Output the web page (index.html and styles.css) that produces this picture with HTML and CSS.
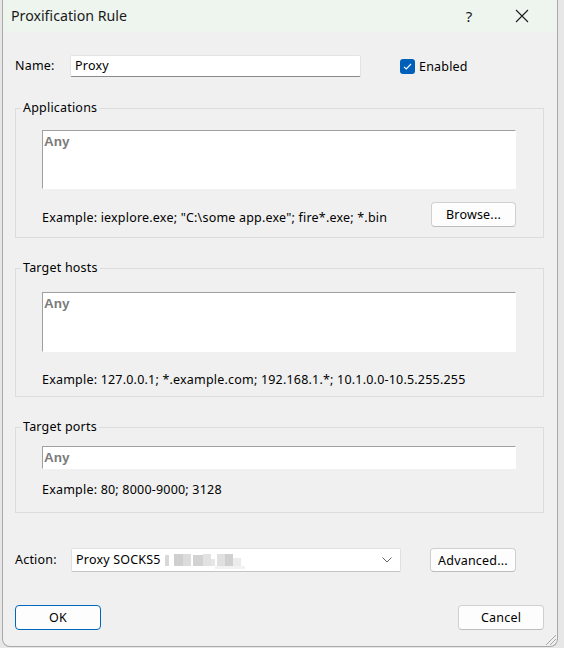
FILE: index.html
```html
<!DOCTYPE html>
<html lang="en">
<head>
<meta charset="utf-8">
<title>Proxification Rule</title>
<link rel="stylesheet" href="styles.css">
</head>
<body>
<div class="window">
  <header class="titlebar">
    <span class="title">Proxification Rule</span>
    <span class="help">?</span>
    <span class="close">
      <svg width="14" height="14" viewBox="0 0 14 14"><path d="M1 1L13 13M13 1L1 13" stroke="#1a1a1a" stroke-width="1.1" fill="none"/></svg>
    </span>
  </header>
  <main class="content">
    <div class="name-row">
      <span class="lbl">Name:</span>
      <div class="field name-field">Proxy</div>
      <div class="check">
        <span class="box"><svg width="15" height="15" viewBox="0 0 15 15"><path d="M4 7.8L6.3 10L11 5" stroke="#fff" stroke-width="1.1" fill="none"/></svg></span>
        <span>Enabled</span>
      </div>
    </div>

    <fieldset class="group g-apps">
      <legend>Applications</legend>
      <div class="area area-apps"><span class="any">Any</span></div>
      <div class="example-row">
        <span class="example">Example: iexplore.exe; "C:\some app.exe"; fire*.exe; *.bin</span>
        <button class="btn browse">Browse...</button>
      </div>
    </fieldset>

    <fieldset class="group g-hosts">
      <legend>Target hosts</legend>
      <div class="area area-hosts"><span class="any">Any</span></div>
      <div class="example ex-hosts">Example: 127.0.0.1; *.example.com; 192.168.1.*; 10.1.0.0-10.5.255.255</div>
    </fieldset>

    <fieldset class="group g-ports">
      <legend>Target ports</legend>
      <div class="area area-ports"><span class="any">Any</span></div>
      <div class="example ex-ports">Example: 80; 8000-9000; 3128</div>
    </fieldset>

    <div class="action-row">
      <span class="lbl">Action:</span>
      <div class="field select">
        <span>Proxy SOCKS5</span>
        <svg class="blur" width="90" height="18" viewBox="0 0 90 18">
          <rect x="0" y="4" width="4" height="11" fill="#d8d8d8"/>
          <rect x="9" y="3" width="9" height="12" fill="#cfcfcf"/>
          <rect x="18" y="3" width="8" height="12" fill="#dcdcdc"/>
          <rect x="28" y="4" width="10" height="11" fill="#d2d2d2"/>
          <rect x="38" y="3" width="8" height="12" fill="#e2e2e2"/>
          <rect x="46" y="8" width="4" height="7" fill="#e6e6e6"/>
          <rect x="52" y="3" width="8" height="12" fill="#e0e0e0"/>
          <rect x="60" y="3" width="8" height="12" fill="#d0d0d0"/>
          <rect x="68" y="7" width="8" height="8" fill="#ececec"/>
          <rect x="50" y="15" width="30" height="3" fill="#f2f2f2"/>
        </svg>
        <svg class="chev" width="10" height="6" viewBox="0 0 10 6"><path d="M0.5 0.5L5 5L9.5 0.5" stroke="#606060" stroke-width="1" fill="none"/></svg>
      </div>
      <button class="btn advanced">Advanced...</button>
    </div>

    <div class="buttons-row">
      <button class="btn ok">OK</button>
      <button class="btn cancel">Cancel</button>
    </div>
  </main>
  <svg class="grip" width="13" height="13" viewBox="0 0 13 13">
    <path d="M12 2L2 12M12 6L6 12M12 10L10 12" stroke="#a8a8a8" stroke-width="1" fill="none"/>
  </svg>
</div>
</body>
</html>
```

FILE: styles.css
```css
html, body {
  margin: 0;
  padding: 0;
}
body {
  background: #e7e7e7;
  width: 564px;
  height: 648px;
  overflow: hidden;
  font-family: "Noto Sans", "Open Sans", sans-serif;
  font-size: 12.5px;
  letter-spacing: 0.2px;
  color: #000;
}
.window {
  position: relative;
  box-sizing: border-box;
  margin-left: 2px;
  width: 556px;
  height: 647px;
  background: #f0f0f0;
  border: 1px solid #a9a9a9;
  border-top: none;
  border-radius: 0 0 8px 8px;
  overflow: hidden;
}
.titlebar {
  height: 32px;
  background: #eef5ef;
  display: flex;
  align-items: center;
  padding-left: 8px;
}
.title {
  font-size: 14.2px;
  letter-spacing: 0;
  color: #1a1a1a;
  flex: 1;
  line-height: 20px;
}
.help {
  font-size: 15px;
  color: #1a1a1a;
  width: 20px;
  text-align: center;
  margin-right: 36px;
}
.close {
  display: flex;
  width: 14px;
  height: 14px;
  margin-right: 28px;
}
.content {
  padding: 0 13px 0 12px;
}
.lbl {
  line-height: 16px;
}
.name-row {
  display: flex;
  align-items: center;
  height: 22px;
  margin-top: 23px;
}
.name-row .lbl {
  width: 55px;
}
.field {
  box-sizing: border-box;
  background: #fff;
  border: 1px solid #e3e3e3;
  border-bottom-color: #8a8a8a;
  border-radius: 2px;
  padding-left: 4px;
  line-height: 20px;
}
.name-field {
  width: 291px;
  height: 22px;
}
.check {
  display: flex;
  align-items: center;
  margin-left: 39px;
  gap: 4px;
}
.box {
  display: flex;
  width: 15px;
  height: 15px;
  background: #005fb8;
  border-radius: 3px;
}
.group {
  margin: 23px 0 0;
  padding: 14px 27px 10px 26px;
  border: 1px solid #dcdcdc;
  min-width: 0;
}
.group legend {
  padding: 0 2px;
  margin-left: -21px;
  line-height: 16px;
}
.area {
  box-sizing: border-box;
  background: #fff;
  border-style: solid;
  border-width: 1px;
  border-color: #a0a0a0 #fff #fff #a0a0a0;
  padding: 2px 0 0 1px;
}
.any {
  font-family: "Liberation Sans", Arial, sans-serif;
  font-weight: bold;
  font-size: 13.5px;
  letter-spacing: 0;
  color: #7b7b7b;
  line-height: 14px;
}
.area-apps {
  height: 59px;
}
.example-row {
  display: flex;
  align-items: center;
  justify-content: space-between;
  margin-top: 13px;
}
.example {
  line-height: 16px;
}
.example-row .example {
  padding-top: 6px;
}
.btn {
  box-sizing: border-box;
  font-family: inherit;
  font-size: 12.5px;
  letter-spacing: 0.2px;
  color: #000;
  background: #fdfdfd;
  border: 1px solid #d0d0d0;
  border-bottom-color: #bdbdbd;
  border-radius: 4px;
  padding: 0;
  height: 25px;
}
.browse {
  width: 85px;
}
.g-hosts {
  margin-top: 22px;
  padding-top: 16px;
  padding-bottom: 8px;
}
.area-hosts {
  height: 60px;
}
.ex-hosts {
  margin-top: 20px;
}
.g-ports {
  margin-top: 22px;
  padding-top: 11px;
  padding-bottom: 14px;
}
.area-ports {
  height: 23px;
}
.ex-ports {
  margin-top: 13px;
}
.action-row {
  display: flex;
  align-items: center;
  margin-top: 35px;
}
.action-row .lbl {
  width: 56px;
}
.select {
  display: flex;
  align-items: center;
  width: 330px;
  height: 24px;
  border-color: #e0e0e0;
  border-bottom-color: #c4c4c4;
}
.select .blur {
  margin-left: 4px;
}
.select .chev {
  margin-left: auto;
  margin-right: 8px;
}
.advanced {
  width: 86px;
  height: 24px;
  margin-left: 29px;
}
.buttons-row {
  display: flex;
  justify-content: space-between;
  margin-top: 33px;
}
.ok {
  width: 86px;
  border: 1px solid #0067c0;
}
.cancel {
  width: 86px;
}
.grip {
  position: absolute;
  right: 0;
  bottom: 0;
}
```
